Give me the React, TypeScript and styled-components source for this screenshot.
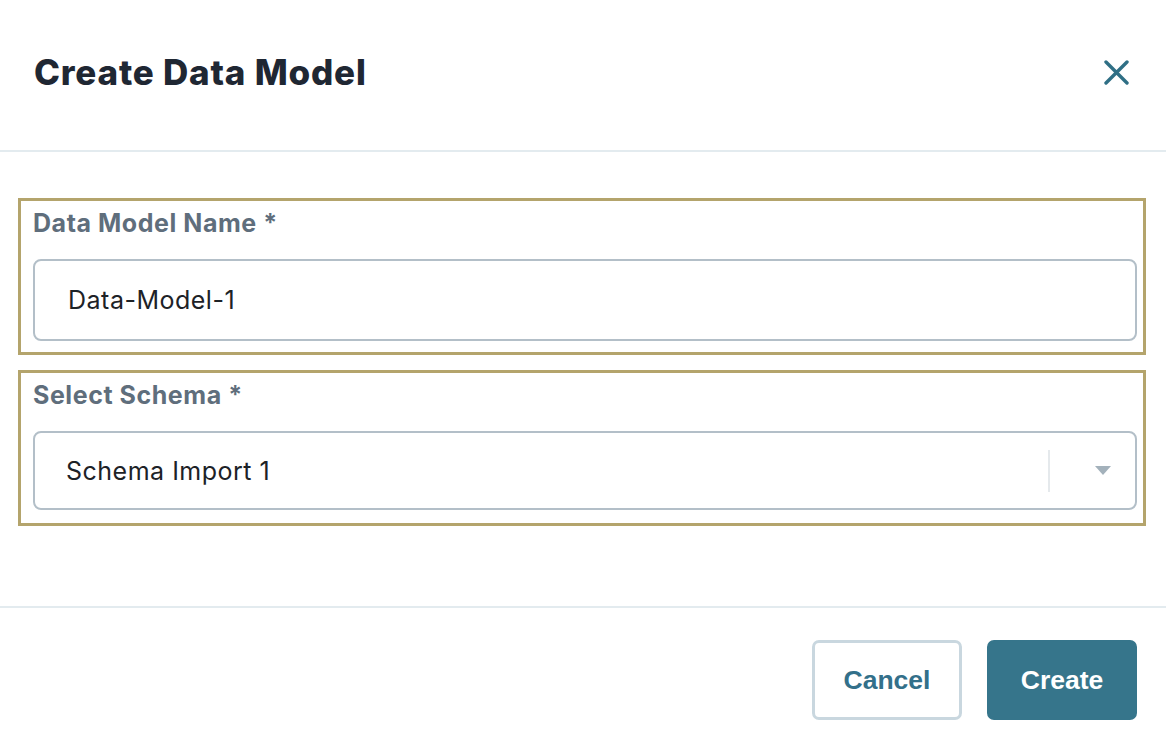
import React from "react";
import styled, { createGlobalStyle } from "styled-components";

const GlobalStyle = createGlobalStyle`
  html, body {
    margin: 0;
    padding: 0;
    background: #ffffff;
    font-family: Inter, "Noto Sans", sans-serif;
  }
`;

const Dialog = styled.div`
  width: 1166px;
  height: 738px;
  display: flex;
  flex-direction: column;
  background: #fff;
`;

const Header = styled.header`
  height: 152px;
  flex-shrink: 0;
  padding: 0 37px 0 34px;
  display: flex;
  align-items: center;
  justify-content: space-between;
  border-bottom: 2px solid #e3ebef;
  box-sizing: border-box;
`;

const Title = styled.h1`
  margin: 0 0 6px;
  font-family: Inter, sans-serif;
  font-size: 35px;
  font-weight: 800;
  letter-spacing: 0.8px;
  color: #1f2733;
`;

const CloseButton = styled.button`
  border: none;
  background: none;
  padding: 0;
  margin-bottom: 6px;
  display: flex;
  cursor: pointer;
`;

const Body = styled.div`
  flex: 1;
  padding: 46px 20px 0 18px;
  display: flex;
  flex-direction: column;
  gap: 15px;
  border-bottom: 2px solid #e3ebef;
`;

const Field = styled.div<{ $bottom: number }>`
  flex-shrink: 0;
  border: 3px solid #b4a46c;
  padding: 8px 6px ${(p) => p.$bottom}px 12px;
  display: flex;
  flex-direction: column;
  gap: 22px;
`;

const Label = styled.label`
  font-size: 25px;
  font-weight: 700;
  letter-spacing: 0.55px;
  color: #5f6e7c;
  line-height: 28px;
`;

const TextInput = styled.input`
  flex-shrink: 0;
  height: 82px;
  box-sizing: border-box;
  border: 2px solid #b3bfc8;
  border-radius: 8px;
  padding: 0 33px;
  font-family: Inter, sans-serif;
  font-size: 25px;
  letter-spacing: 0.5px;
  color: #1d2227;
  outline: none;
`;

const SelectBox = styled.div`
  flex-shrink: 0;
  height: 79px;
  box-sizing: border-box;
  border: 2px solid #b3bfc8;
  border-radius: 8px;
  padding: 0 0 0 31px;
  display: flex;
  align-items: center;
  font-size: 25px;
  letter-spacing: 0.5px;
  color: #1d2227;
`;

const SelectValue = styled.span`
  flex: 1;
`;

const Separator = styled.span`
  width: 2px;
  height: 42px;
  background: #e5e9ec;
`;

const Caret = styled.span`
  width: 85px;
  box-sizing: border-box;
  display: flex;
  justify-content: center;
  padding-left: 21px;
`;

const Footer = styled.footer`
  flex-shrink: 0;
  height: 130px;
  padding: 32px 29px 0 0;
  display: flex;
  align-items: flex-start;
  justify-content: flex-end;
  gap: 25px;
  box-sizing: border-box;
`;

const Button = styled.button<{ $primary?: boolean }>`
  width: 150px;
  height: 80px;
  box-sizing: border-box;
  border-radius: 7px;
  border: 3px solid ${(p) => (p.$primary ? "#36758b" : "#c9d7df")};
  background: ${(p) => (p.$primary ? "#36758b" : "#fff")};
  color: ${(p) => (p.$primary ? "#fff" : "#33708a")};
  font-family: "Liberation Sans", Arial, sans-serif;
  font-size: 26.5px;
  font-weight: 700;
  cursor: pointer;
`;

export default function App() {
  return (
    <>
      <GlobalStyle />
      <Dialog>
        <Header>
          <Title>Create Data Model</Title>
          <CloseButton aria-label="Close">
            <svg width="25" height="25" viewBox="0 0 25 25">
              <path
                d="M2 2 L23 23 M23 2 L2 23"
                stroke="#2f6f85"
                strokeWidth="3.4"
                strokeLinecap="round"
              />
            </svg>
          </CloseButton>
        </Header>
        <Body>
          <Field $bottom={11}>
            <Label>Data Model Name *</Label>
            <TextInput defaultValue="Data-Model-1" />
          </Field>
          <Field $bottom={13}>
            <Label>Select Schema *</Label>
            <SelectBox>
              <SelectValue>Schema Import 1</SelectValue>
              <Separator />
              <Caret>
                <svg width="16" height="9" viewBox="0 0 16 9">
                  <path d="M0 0 H16 L8 9 Z" fill="#a3b1bb" />
                </svg>
              </Caret>
            </SelectBox>
          </Field>
        </Body>
        <Footer>
          <Button>Cancel</Button>
          <Button $primary>Create</Button>
        </Footer>
      </Dialog>
    </>
  );
}
